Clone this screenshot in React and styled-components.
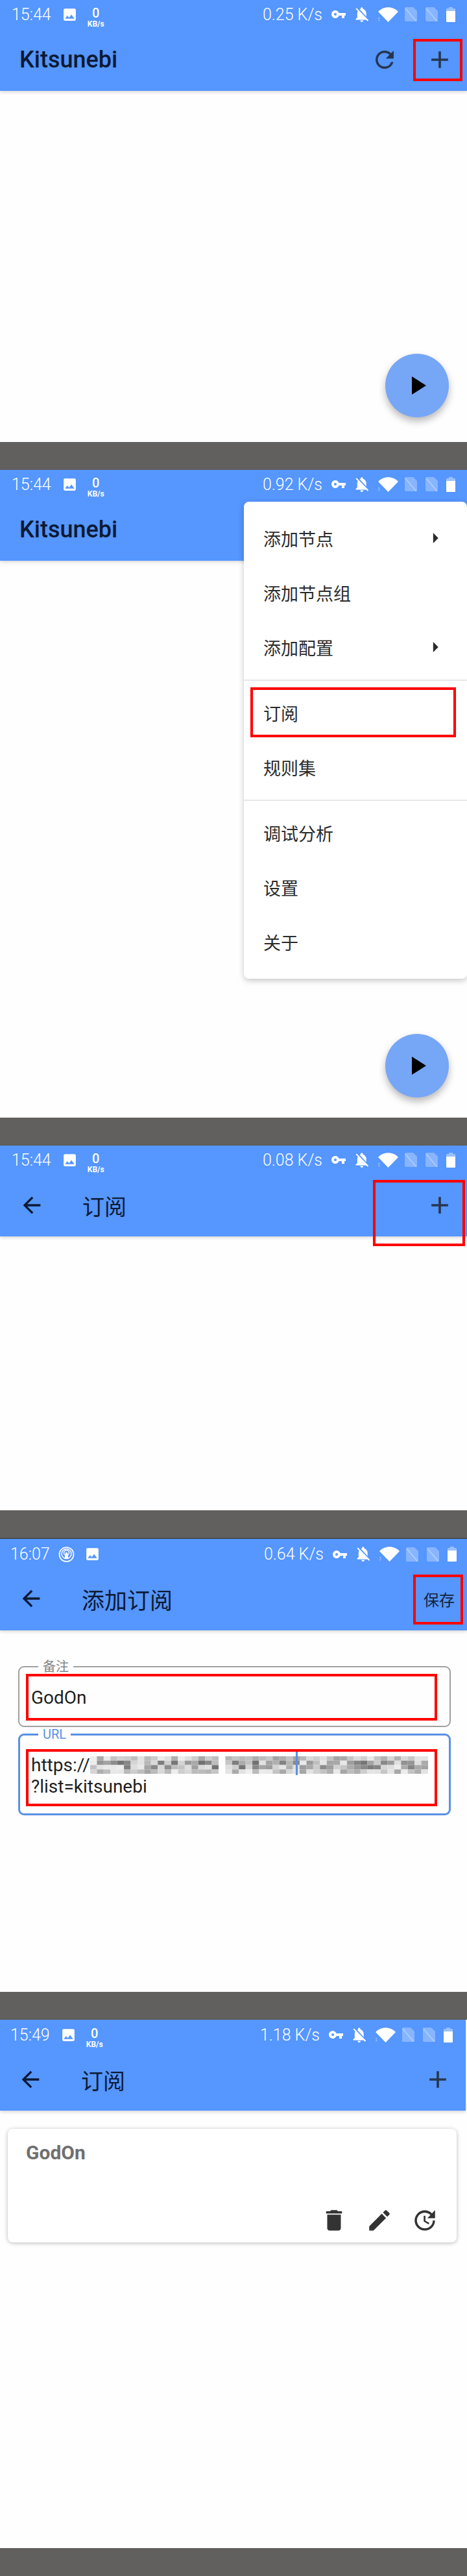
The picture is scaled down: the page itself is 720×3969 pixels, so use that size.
import React from "react";
import styled, { createGlobalStyle } from "styled-components";
import {
  MdAdd,
  MdArrowBack,
  MdArrowRight,
  MdDelete,
  MdEdit,
  MdImage,
  MdPlayArrow,
  MdRefresh,
  MdUpdate,
} from "react-icons/md";

const GlobalStyle = createGlobalStyle`
  html, body {
    margin: 0;
    padding: 0;
    background: #fff;
  }
  body {
    font-family: Roboto, "Noto Sans CJK SC", sans-serif;
  }
`;

const Page = styled.div`
  width: 720px;
  height: 3969px;
  display: flex;
  flex-direction: column;
  overflow: hidden;
`;

const Screen = styled.section`
  position: relative;
  flex: none;
  height: ${(p) => p.$height}px;
  background: #fefefe;
`;

const Gap = styled.div`
  flex: none;
  height: 43px;
  background: #61605e;
`;

const Bar = styled.header`
  width: ${(p) => p.$width || 720}px;
  height: ${(p) => p.$height || 140}px;
  background: #5596ff;
  box-shadow: 0 2px 5px rgba(0, 0, 0, 0.16);
  ${(p) => p.$topLine && "border-top: 1px solid #33363c; box-sizing: border-box;"}
`;

const StatusBar = styled.div`
  height: 44px;
  box-sizing: border-box;
  padding: ${(p) => p.$top || 0}px ${(p) => p.$right}px 0 ${(p) => p.$left}px;
  display: flex;
  align-items: center;
  justify-content: space-between;
  color: #fff;
`;

const StatusGroup = styled.div`
  display: flex;
  align-items: center;
`;

const Clock = styled.span`
  font-size: 25px;
  font-weight: 300;
  margin-right: ${(p) => p.$gap}px;
`;

const Speed = styled.span`
  font-size: 25px;
  font-weight: 300;
  margin-right: 13px;
`;

const NetStack = styled.div`
  width: 26px;
  margin-left: 15px;
  display: flex;
  flex-direction: column;
  align-items: center;
  font-weight: 500;
  line-height: 1;
  padding-top: 8px;
`;

const NetValue = styled.span`
  font-size: 20px;
`;

const NetUnit = styled.span`
  font-size: 12px;
  font-weight: 700;
  margin-top: 1px;
  white-space: nowrap;
`;

const Glyph = styled.svg`
  display: block;
  flex: none;
  width: ${(p) => p.$w}px;
  height: ${(p) => p.$h}px;
  margin-right: ${(p) => p.$gap || 0}px;
  fill: #fff;
`;

const PictureIcon = styled(MdImage)`
  display: block;
  flex: none;
  width: 25px;
  height: 25px;
  margin-left: ${(p) => p.$gap || 0}px;
  color: #fff;
`;

const Toolbar = styled.div`
  height: 96px;
  box-sizing: border-box;
  padding: 0 ${(p) => p.$right}px 0 ${(p) => p.$left}px;
  display: flex;
  align-items: center;
  color: #0d1a33;
`;

const AppName = styled.h1`
  margin: 0;
  font-size: 36px;
  font-weight: 500;
  flex: 1;
`;

const PageTitle = styled.h1`
  margin: 0 0 0 ${(p) => p.$gap}px;
  font-size: ${(p) => p.$size}px;
  font-weight: 400;
  flex: 1;
`;

const BackIcon = styled(MdArrowBack)`
  flex: none;
  width: 40px;
  height: 40px;
`;

const ReloadIcon = styled(MdRefresh)`
  flex: none;
  width: 42px;
  height: 42px;
  margin-right: 42px;
  color: #27364f;
`;

const PlusIcon = styled(MdAdd)`
  flex: none;
  width: 44px;
  height: 44px;
  color: #27364f;
`;

const SaveLabel = styled.span`
  font-size: 24px;
  color: #14233f;
`;

const Fab = styled.button`
  position: absolute;
  right: 28px;
  bottom: ${(p) => p.$bottom}px;
  width: 98px;
  height: 98px;
  padding: 0;
  border: none;
  border-radius: 50%;
  background: #76a6f6;
  box-shadow: 0 6px 12px rgba(0, 0, 0, 0.28);
  display: flex;
  align-items: center;
  justify-content: center;
  color: #000;
`;

const PlayIcon = styled(MdPlayArrow)`
  width: 48px;
  height: 48px;
`;

const Highlight = styled.div`
  position: absolute;
  left: ${(p) => p.$x}px;
  top: ${(p) => p.$y}px;
  width: ${(p) => p.$w}px;
  height: ${(p) => p.$h}px;
  box-sizing: border-box;
  border: 4px solid #ff0000;
  pointer-events: none;
`;

const Menu = styled.div`
  position: absolute;
  top: 49px;
  right: 0;
  width: 344px;
  box-sizing: border-box;
  padding: 14px 0 15px;
  background: #fff;
  border-radius: 8px;
  box-shadow: 0 3px 10px rgba(0, 0, 0, 0.22);
`;

const MenuItem = styled.div`
  height: 84px;
  box-sizing: border-box;
  padding: 0 30px;
  display: flex;
  align-items: center;
  justify-content: space-between;
  font-size: 27px;
  color: #2b2b2b;
`;

const MenuArrow = styled(MdArrowRight)`
  width: 38px;
  height: 38px;
  color: #2b2b2b;
`;

const MenuDivider = styled.div`
  height: 2px;
  margin: 8px 0 7px;
  background: #e6e6e6;
`;

const Form = styled.form`
  padding: 46px 25px 0 28px;
  display: flex;
  flex-direction: column;
  gap: 1px;
`;

const Field = styled.fieldset`
  margin: 0;
  height: ${(p) => p.$height}px;
  box-sizing: border-box;
  padding: 21px 16px 0 ${(p) => (p.$active ? 17 : 18)}px;
  min-width: 0;
  border: ${(p) => (p.$active ? "3px solid #5b90e6" : "2px solid #a0a0a0")};
  border-radius: 9px;
`;

const FieldLabel = styled.legend`
  margin-left: 11px;
  padding: 0 7px;
  height: 20px;
  font-size: 20px;
  line-height: 20px;
  color: ${(p) => (p.$active ? "#5b90e6" : "#858585")};
`;

const FieldLine = styled.div`
  height: 33px;
  display: flex;
  align-items: center;
  font-size: 28px;
  line-height: 33px;
  color: #1e1e1e;
  white-space: nowrap;
`;

const Mosaic = styled.svg`
  flex: none;
  width: 521px;
  height: 33px;
  overflow: visible;
`;

const Card = styled.article`
  margin: 28px 16px 0 12px;
  height: 175px;
  box-sizing: border-box;
  padding: 19px 28px 13px;
  display: flex;
  flex-direction: column;
  justify-content: space-between;
  background: #fff;
  border-radius: 8px;
  box-shadow: 0 1px 6px rgba(0, 0, 0, 0.28);
`;

const CardTitle = styled.div`
  font-size: 30px;
  line-height: 36px;
  font-weight: 700;
  color: #707070;
`;

const CardActions = styled.div`
  display: flex;
  justify-content: flex-end;
  gap: 28px;
  color: #333;
  svg {
    width: 42px;
    height: 42px;
  }
`;

const KeyGlyph = () => (
  <Glyph $w={24} $h={12} $gap={12} viewBox="1 6 22 12">
    <path d="M12.65 10C11.83 7.67 9.61 6 7 6c-3.31 0-6 2.69-6 6s2.69 6 6 6c2.61 0 4.83-1.67 5.65-4H17v4h4v-4h2v-4H12.65zM7 14c-1.1 0-2-.9-2-2s.9-2 2-2 2 .9 2 2-.9 2-2 2z" />
  </Glyph>
);

const BellOffGlyph = () => (
  <Glyph $w={24} $h={23} $gap={13} viewBox="3 2.3 18.4 19.8">
    <path d="M20 18.69L7.84 6.14 5.27 3.49 4 4.76l2.8 2.8v.01c-.52.99-.8 2.16-.8 3.42v5l-2 2v1h13.73l2 2L21 19.72l-1-1.03zM12 22c1.11 0 2-.89 2-2h-4c0 1.11.89 2 2 2zm6-7.32V11c0-3.08-1.64-5.64-4.5-6.32V4c0-.83-.67-1.5-1.5-1.5s-1.5.67-1.5 1.5v.68c-.15.03-.29.08-.42.12-.1.03-.2.07-.3.11h-.01c-.2.08-.4.17-.59.27-.01 0-.01 0-.02.01L18 14.68z" />
  </Glyph>
);

const WifiGlyph = () => (
  <Glyph $w={31} $h={23} $gap={10} viewBox="0 0 31 23">
    <path d="M0 7C8-2 23-2 31 7L15.5 23Z" />
    <path d="M1 15.5l2 2.5H0zM1 22l2-2.500H0z" opacity="0.45" />
  </Glyph>
);

const SimGlyph = ({ gap }) => (
  <Glyph $w={19} $h={22} $gap={gap} viewBox="0 0 19 22">
    <path
      d="M2 0H13L19 6V20a2 2 0 0 1-2 2H2a2 2 0 0 1-2-2V2a2 2 0 0 1 2-2Z"
      opacity="0.3"
    />
    <path d="M1 2L18 22" stroke="#fff" strokeWidth="1.6" opacity="0.35" />
  </Glyph>
);

const BatteryGlyph = () => (
  <Glyph $w={14} $h={23} viewBox="0 0 14 23">
    <path d="M4 0H10V2H13a1 1 0 0 1 1 1V6H0V3a1 1 0 0 1 1-1H4Z" opacity="0.4" />
    <path d="M0 6H14V22a1 1 0 0 1-1 1H1a1 1 0 0 1-1-1Z" />
  </Glyph>
);

const HotspotGlyph = () => (
  <Glyph $w={25} $h={24} viewBox="0 0 25 24">
    <circle cx="12.5" cy="12" r="11" fill="none" stroke="#fff" strokeWidth="1.7" />
    <circle cx="12.5" cy="11" r="7.500" fill="none" stroke="#fff" strokeWidth="1.500" />
    <circle cx="12.5" cy="9.500" r="4" fill="none" stroke="#fff" strokeWidth="1.500" />
    <path d="M11 9h3l1.500 10h-6z" />
  </Glyph>
);

const StatusRight = ({ speed }) => (
  <StatusGroup>
    <Speed>{speed}</Speed>
    <KeyGlyph />
    <BellOffGlyph />
    <WifiGlyph />
    <SimGlyph gap={13} />
    <SimGlyph gap={13} />
    <BatteryGlyph />
  </StatusGroup>
);

const StatusLeft = ({ time }) => (
  <StatusGroup>
    <Clock $gap={16}>{time}</Clock>
    <PictureIcon />
    <NetStack>
      <NetValue>0</NetValue>
      <NetUnit>KB/s</NetUnit>
    </NetStack>
  </StatusGroup>
);

// grey blocks that hide the private part of the url
const mosaicCells = [];
for (let row = 0; row < 4; row++) {
  for (let col = 0; col < 50; col++) {
    if (col === 19) continue;
    const noise = Math.abs(Math.sin(row * 91.7 + col * 12.9898) * 43758.5453) % 1;
    const weight = row === 1 || row === 2 ? 1 : 0.6;
    const value = Math.round(238 - noise * weight * 125);
    mosaicCells.push({ row, col, value });
  }
}

const PixelatedUrl = () => (
  <Mosaic viewBox="0 0 521 33">
    {mosaicCells.map((c) => (
      <rect
        key={`${c.row}-${c.col}`}
        x={c.col * 10.42}
        y={3 + c.row * 6.75}
        width="10.42"
        height="6.75"
        fill={`rgb(${c.value},${c.value},${c.value})`}
      />
    ))}
    <rect x="317" y="-5" width="3" height="37" fill="#5b90e6" />
  </Mosaic>
);

const App = () => {
  return (
    <Page>
      <GlobalStyle />

      <Screen $height={681}>
        <Bar>
          <StatusBar $left={18} $right={18}>
            <StatusLeft time="15:44" />
            <StatusRight speed="0.25 K/s" />
          </StatusBar>
          <Toolbar $left={30} $right={20}>
            <AppName>Kitsunebi</AppName>
            <ReloadIcon />
            <PlusIcon />
          </Toolbar>
        </Bar>
        <Fab $bottom={38}>
          <PlayIcon />
        </Fab>
        <Highlight $x={637} $y={60} $w={76} $h={65} />
      </Screen>
      <Gap />

      <Screen $height={998}>
        <Bar>
          <StatusBar $left={18} $right={18}>
            <StatusLeft time="15:44" />
            <StatusRight speed="0.92 K/s" />
          </StatusBar>
          <Toolbar $left={30} $right={20}>
            <AppName>Kitsunebi</AppName>
          </Toolbar>
        </Bar>
        <Fab $bottom={31}>
          <PlayIcon />
        </Fab>
        <Menu>
          <MenuItem>
            添加节点
            <MenuArrow />
          </MenuItem>
          <MenuItem>添加节点组</MenuItem>
          <MenuItem>
            添加配置
            <MenuArrow />
          </MenuItem>
          <MenuDivider />
          <MenuItem>订阅</MenuItem>
          <MenuItem>规则集</MenuItem>
          <MenuDivider />
          <MenuItem>调试分析</MenuItem>
          <MenuItem>设置</MenuItem>
          <MenuItem>关于</MenuItem>
        </Menu>
        <Highlight $x={386} $y={335} $w={317} $h={77} />
      </Screen>
      <Gap />

      <Screen $height={562}>
        <Bar>
          <StatusBar $left={18} $right={18}>
            <StatusLeft time="15:44" />
            <StatusRight speed="0.08 K/s" />
          </StatusBar>
          <Toolbar $left={29} $right={20}>
            <BackIcon />
            <PageTitle $gap={58} $size={34}>
              订阅
            </PageTitle>
            <PlusIcon />
          </Toolbar>
        </Bar>
        <Highlight $x={575} $y={53} $w={142} $h={102} />
      </Screen>
      <Gap />

      <Screen $height={699}>
        <Bar $height={142} $topLine>
          <StatusBar $left={16} $right={16} $top={3}>
            <StatusGroup>
              <Clock $gap={13}>16:07</Clock>
              <HotspotGlyph />
              <PictureIcon $gap={15} />
            </StatusGroup>
            <StatusRight speed="0.64 K/s" />
          </StatusBar>
          <Toolbar $left={28} $right={19}>
            <BackIcon />
            <PageTitle $gap={58} $size={35}>
              添加订阅
            </PageTitle>
            <SaveLabel>保存</SaveLabel>
          </Toolbar>
        </Bar>
        <Form>
          <Field $height={103}>
            <FieldLabel>备注</FieldLabel>
            <FieldLine>GodOn</FieldLine>
          </Field>
          <Field $height={135} $active>
            <FieldLabel $active>URL</FieldLabel>
            <FieldLine>
              https://
              <PixelatedUrl />
            </FieldLine>
            <FieldLine>?list=kitsunebi</FieldLine>
          </Field>
        </Form>
        <Highlight $x={637} $y={56} $w={77} $h={77} />
        <Highlight $x={40} $y={209} $w={634} $h={72} />
        <Highlight $x={40} $y={325} $w={634} $h={88} />
      </Screen>
      <Gap />

      <Screen $height={814}>
        <Bar $width={718}>
          <StatusBar $left={16} $right={20} $top={2}>
            <StatusLeft time="15:49" />
            <StatusRight speed="1.18 K/s" />
          </StatusBar>
          <Toolbar $left={27} $right={21}>
            <BackIcon />
            <PageTitle $gap={58} $size={34}>
              订阅
            </PageTitle>
            <PlusIcon />
          </Toolbar>
        </Bar>
        <Card>
          <CardTitle>GodOn</CardTitle>
          <CardActions>
            <MdDelete />
            <MdEdit />
            <MdUpdate />
          </CardActions>
        </Card>
      </Screen>
      <Gap />
    </Page>
  );
};

export default App;
